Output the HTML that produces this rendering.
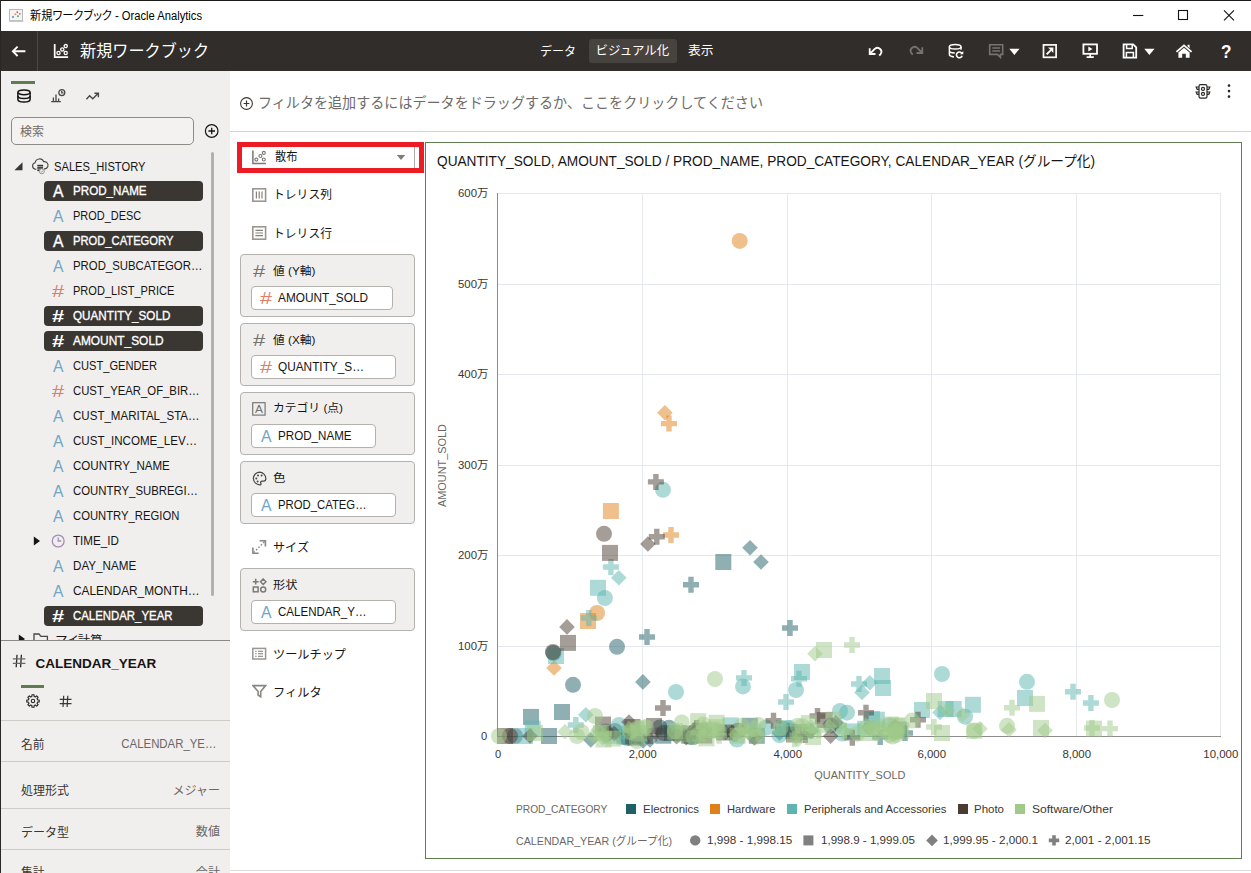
<!DOCTYPE html>
<html lang="ja"><head><meta charset="utf-8"><title>新規ワークブック - Oracle Analytics</title>
<style>
html,body{margin:0;padding:0;background:#fff}
html{width:1251px;height:873px;overflow:hidden}
body{width:1251px;height:873px;position:relative;overflow:hidden;font-family:"Liberation Sans","Noto Sans CJK JP",sans-serif;}
.app{position:absolute;left:0;top:0;width:1251px;height:873px;overflow:hidden;background:#fff}
.b{position:absolute;display:block}
.t{position:absolute;white-space:nowrap;line-height:1}
.sb{-webkit-text-stroke:0.35px #fff}
</style></head>
<body>
<div class="app">
<div class="b" style="left:0;top:0;width:1251px;height:1px;background:#1b1b1b"></div>
<div class="b" style="left:0;top:0;width:1px;height:873px;background:#2a2826;z-index:50"></div>
<svg class="b" style="left:9px;top:8px" width="15" height="15" viewBox="0 0 15 15" ><rect x="0.5" y="1.5" width="13" height="11" fill="#f4f4f4" stroke="#b9b9b9"/>
<rect x="0" y="12.5" width="14.5" height="1.6" fill="#c9c9c9"/>
<circle cx="4" cy="9" r="1" fill="#4a90c8"/><circle cx="6.3" cy="6.3" r="1" fill="#e9a13b"/><circle cx="9" cy="8.2" r="1" fill="#5fae5f"/><circle cx="8.3" cy="4.2" r="0.9" fill="#d9534f"/><circle cx="10.8" cy="5.8" r="0.9" fill="#4a90c8"/></svg>
<span class="t" style="left:30.00px;top:10.40px;font-size:12px;color:#000;transform:scaleX(0.9312);transform-origin:0 50%;font-feature-settings:'palt';">新規ワークブック - Oracle Analytics</span>
<svg class="b" style="left:1128px;top:5px" width="118" height="22" viewBox="0 0 118 22" ><g stroke="#111" stroke-width="1.1" fill="none">
<path d="M5 10.5h10.3"/><rect x="50.5" y="5.5" width="9" height="9"/><path d="M96 5.3l10 10M106 5.3l-10 10"/></g></svg>
<div class="b" style="left:1px;top:31px;width:1250px;height:40px;background:#312d2a"></div>
<div class="b" style="left:37px;top:31px;width:1px;height:40px;background:#4b4744"></div>
<svg class="b" style="left:10px;top:42.6px" width="18" height="16" viewBox="0 0 18 16" ><path d="M15.4 8.3H3.4M7.6 3.6L2.9 8.3l4.7 4.7" fill="none" stroke="#fff" stroke-width="1.9" stroke-linecap="butt" stroke-linejoin="miter"/></svg>
<svg class="b" style="left:53px;top:43px" width="16" height="16" viewBox="0 0 16 16" ><path d="M1.7 1v13.2h13.4" fill="none" stroke="#fff" stroke-width="1.7"/>
<circle cx="5.5" cy="10" r="1.6" fill="none" stroke="#fff" stroke-width="1.3"/><circle cx="9.3" cy="6.4" r="1.6" fill="none" stroke="#fff" stroke-width="1.3"/><circle cx="12.7" cy="3.1" r="1.6" fill="none" stroke="#fff" stroke-width="1.3"/><circle cx="12.7" cy="10" r="1.6" fill="none" stroke="#fff" stroke-width="1.3"/></svg>
<span class="t" style="left:80.00px;top:43.00px;font-size:16.5px;color:#fff;transform:scaleX(0.9773);transform-origin:0 50%;">新規ワークブック</span>
<div class="b" style="left:589px;top:39px;width:88px;height:24px;background:#47433f;border-radius:3px"></div>
<span class="t" style="left:540.00px;top:45.90px;font-size:12.5px;color:#fff;transform:scaleX(0.9596);transform-origin:0 50%;">データ</span>
<span class="t" style="left:595.60px;top:44.90px;font-size:12.5px;color:#fff;">ビジュアル化</span>
<span class="t" style="left:688.00px;top:45.40px;font-size:12.5px;color:#fff;transform:scaleX(1.0194);transform-origin:0 50%;">表示</span>
<svg class="b" style="left:866.4px;top:42.1px" width="20" height="16" viewBox="0 0 20 16" ><path d="M3.7 6.2v5.8h5.8M4.2 11.5l4.6-4.6a3.9 3.9 0 0 1 5.6 5.4l-1.2 1.2" fill="none" stroke="#fff" stroke-width="1.8"/></svg>
<svg class="b" style="left:906px;top:41.3px" width="20" height="16" viewBox="0 0 20 16" ><path d="M16.3 6.2v5.8h-5.8M15.8 11.5l-4.6-4.6a3.9 3.9 0 0 0-5.6 5.4l1.2 1.2" fill="none" stroke="#77736f" stroke-width="1.8"/></svg>
<svg class="b" style="left:947px;top:43px" width="18" height="16" viewBox="0 0 18 16" ><g fill="none" stroke="#fff" stroke-width="1.5"><ellipse cx="8.2" cy="3.8" rx="5.8" ry="2.3"/><path d="M2.4 3.8v7.8c0 1.2 2 2.1 4.6 2.3M14 3.8v3M2.4 7.7c0 1.2 2.4 2.2 5.4 2.2"/>
<path d="M14.6 10a2.9 2.9 0 1 0 .5 2.8" stroke-width="1.6"/></g><path d="M16.3 8v3.3h-3.3z" fill="#fff"/></svg>
<svg class="b" style="left:988px;top:43px" width="17" height="16" viewBox="0 0 17 16" ><path d="M1.7 1.8h13v9.6h-2.3v3l-3-3H1.7z" fill="none" stroke="#77736f" stroke-width="1.6"/><path d="M4.3 5h7.8M4.3 8h7.8" stroke="#77736f" stroke-width="1.4"/></svg>
<svg class="b" style="left:1009px;top:48px" width="11" height="8" viewBox="0 0 11 8" ><path d="M0.3 0.8h10.2L5.4 7z" fill="#fff"/></svg>
<svg class="b" style="left:1042px;top:43px" width="16" height="16" viewBox="0 0 16 16" ><rect x="1.5" y="1.9" width="12.6" height="12.4" fill="none" stroke="#fff" stroke-width="1.7"/><path d="M4.6 11.4l5.6-5.6" stroke="#fff" stroke-width="1.9"/><path d="M6 4.6h5.4v5.4z" fill="#fff"/></svg>
<svg class="b" style="left:1082px;top:43px" width="17" height="16" viewBox="0 0 17 16" ><rect x="1.4" y="1.4" width="13.6" height="9.4" fill="none" stroke="#fff" stroke-width="1.8"/><path d="M6.3 3.6l4.2 2.5-4.2 2.5z" fill="#fff"/><path d="M8.2 11v2.6M4.6 14.2h7.2" stroke="#fff" stroke-width="1.7"/></svg>
<svg class="b" style="left:1122px;top:43px" width="16" height="16" viewBox="0 0 16 16" ><path d="M1.6 1.4h9.6l3 3v10.2H1.6z" fill="none" stroke="#fff" stroke-width="1.8"/><path d="M4.6 1.6v4h5.6v-4M4.4 14.4V9.6h7v4.8" fill="none" stroke="#fff" stroke-width="1.5"/></svg>
<svg class="b" style="left:1144px;top:48px" width="11" height="8" viewBox="0 0 11 8" ><path d="M0.3 0.8h10.2L5.4 7z" fill="#fff"/></svg>
<svg class="b" style="left:1175px;top:43px" width="18" height="16" viewBox="0 0 18 16" ><path d="M0.8 8.2L9 1.2l8.2 7-1.2 1.3L9 3.6 2 9.5z" fill="#fff"/><path d="M3.4 9.4L9 4.8l5.6 4.6v5.4h-3.8v-4H7.2v4H3.4z" fill="#fff"/><path d="M12.6 1.8h2v3.4l-2-1.7z" fill="#fff"/></svg>
<span class="t" style="left:1220.50px;top:41.50px;font-size:19px;color:#fff;font-weight:700;transform:scaleX(0.9044);transform-origin:0 50%;">?</span>
<div class="b" style="left:1px;top:71px;width:229px;height:802px;background:#f1efed"></div>
<div class="b" style="left:11px;top:81px;width:24px;height:3px;background:#5f7d4f"></div>
<svg class="b" style="left:16px;top:88px" width="16" height="16" viewBox="0 0 16 16" ><g fill="none" stroke="#161513" stroke-width="1.5"><ellipse cx="8" cy="4.3" rx="6.1" ry="2.4"/><path d="M1.9 4.3v7.3c0 1.4 2.7 2.5 6.1 2.5s6.1-1.1 6.1-2.5V4.3"/><path d="M1.9 7.9c0 1.4 2.7 2.5 6.1 2.5s6.1-1.1 6.1-2.5"/></g></svg>
<svg class="b" style="left:50px;top:88px" width="17" height="16" viewBox="0 0 17 16" ><g stroke="#4a4643" stroke-width="1.3" fill="none"><path d="M1.2 13.6h9.6M3.4 13.4v-4M6 13.4V6.6M8.6 13.4v-3"/><circle cx="11.8" cy="4.6" r="3"/><path d="M11.8 2.8v2h1.6"/></g></svg>
<svg class="b" style="left:85px;top:89.2px" width="16" height="16" viewBox="0 0 16 16" ><path d="M1.4 10.2l3.2-3.4 3.2 3 5.2-5.2M9.4 4.2h4v4" fill="none" stroke="#4a4643" stroke-width="1.4"/></svg>
<div class="b" style="left:11px;top:117px;width:183px;height:28px;border:1px solid #8f8b87;border-radius:5px;box-sizing:border-box;background:#f4f2f0"></div>
<span class="t" style="left:20.00px;top:126.10px;font-size:12px;color:#6f6b68;">検索</span>
<svg class="b" style="left:204px;top:123px" width="16" height="16" viewBox="0 0 16 16" ><circle cx="7.7" cy="8" r="6.3" fill="none" stroke="#161513" stroke-width="1.2"/><path d="M4.4 8h6.6M7.7 4.7v6.6" stroke="#161513" stroke-width="1.3"/></svg>
<div class="b" style="left:210.5px;top:152px;width:3.4px;height:444px;background:#b4b0ac;border-radius:2px"></div>
<svg class="b" style="left:13.6px;top:161.8px" width="9" height="9" viewBox="0 0 9 9" ><path d="M8.5 0.2V8.3H0.4z" fill="#3a3632"/></svg>
<svg class="b" style="left:31px;top:157px" width="18" height="18" viewBox="0 0 18 18" ><path d="M5.4 12.2H4.6a3.3 3.3 0 0 1-.5-6.5 4.5 4.5 0 0 1 8.6-1 3.6 3.6 0 0 1 1.3 7.2H13" fill="none" stroke="#4a4643" stroke-width="1.1"/>
<g fill="#3a3632"><rect x="6.3" y="7.8" width="5.8" height="1.7"/><rect x="6.3" y="10.1" width="5.8" height="1.7"/><rect x="6.3" y="12.4" width="5.8" height="1.7"/></g>
<circle cx="10.8" cy="14.3" r="2.5" fill="#f1efed" stroke="#8b8783" stroke-width="0.9"/><path d="M9.7 14.3l0.9 0.9 1.4-1.7" fill="none" stroke="#8b8783" stroke-width="0.8"/></svg>
<span class="t" style="left:54.40px;top:160.00px;font-size:13px;color:#161513;transform:scaleX(0.8594);transform-origin:0 50%;">SALES_HISTORY</span>
<div class="b" style="left:44px;top:181px;width:159px;height:20px;background:#3a3632;border-radius:4px"></div>
<span class="t sb" style="left:53.00px;top:183.10px;font-size:16.5px;color:#fff;transform:scaleX(0.9532);transform-origin:0 50%;">A</span>
<span class="t sb" style="left:72.60px;top:184.00px;font-size:13px;color:#fff;transform:scaleX(0.8936);transform-origin:0 50%;">PROD_NAME</span>
<span class="t" style="left:53.00px;top:208.10px;font-size:16.5px;color:#6fa6c6;transform:scaleX(0.9532);transform-origin:0 50%;">A</span>
<span class="t" style="left:72.60px;top:209.00px;font-size:13px;color:#161513;transform:scaleX(0.8428);transform-origin:0 50%;">PROD_DESC</span>
<div class="b" style="left:44px;top:231px;width:159px;height:20px;background:#3a3632;border-radius:4px"></div>
<span class="t sb" style="left:53.00px;top:233.10px;font-size:16.5px;color:#fff;transform:scaleX(0.9532);transform-origin:0 50%;">A</span>
<span class="t sb" style="left:72.60px;top:234.00px;font-size:13px;color:#fff;transform:scaleX(0.8615);transform-origin:0 50%;">PROD_CATEGORY</span>
<span class="t" style="left:53.00px;top:258.10px;font-size:16.5px;color:#6fa6c6;transform:scaleX(0.9532);transform-origin:0 50%;">A</span>
<span class="t" style="left:72.60px;top:259.00px;font-size:13px;color:#161513;transform:scaleX(0.8746);transform-origin:0 50%;">PROD_SUBCATEGOR…</span>
<span class="t" style="left:52.00px;top:283.10px;font-size:16.5px;color:#d9806a;transform:scaleX(1.3279);transform-origin:0 50%;">#</span>
<span class="t" style="left:72.60px;top:284.00px;font-size:13px;color:#161513;transform:scaleX(0.8498);transform-origin:0 50%;">PROD_LIST_PRICE</span>
<div class="b" style="left:44px;top:306px;width:159px;height:20px;background:#3a3632;border-radius:4px"></div>
<span class="t" style="left:52.00px;top:308.10px;font-size:16.5px;color:#fff;font-weight:700;transform:scaleX(1.3279);transform-origin:0 50%;">#</span>
<span class="t sb" style="left:72.60px;top:309.00px;font-size:13px;color:#fff;transform:scaleX(0.8989);transform-origin:0 50%;">QUANTITY_SOLD</span>
<div class="b" style="left:44px;top:331px;width:159px;height:20px;background:#3a3632;border-radius:4px"></div>
<span class="t" style="left:52.00px;top:333.10px;font-size:16.5px;color:#fff;font-weight:700;transform:scaleX(1.3279);transform-origin:0 50%;">#</span>
<span class="t sb" style="left:72.60px;top:334.00px;font-size:13px;color:#fff;transform:scaleX(0.9154);transform-origin:0 50%;">AMOUNT_SOLD</span>
<span class="t" style="left:53.00px;top:358.10px;font-size:16.5px;color:#6fa6c6;transform:scaleX(0.9532);transform-origin:0 50%;">A</span>
<span class="t" style="left:72.60px;top:359.00px;font-size:13px;color:#161513;transform:scaleX(0.8550);transform-origin:0 50%;">CUST_GENDER</span>
<span class="t" style="left:52.00px;top:383.10px;font-size:16.5px;color:#d9806a;transform:scaleX(1.3279);transform-origin:0 50%;">#</span>
<span class="t" style="left:72.60px;top:384.00px;font-size:13px;color:#161513;transform:scaleX(0.8719);transform-origin:0 50%;">CUST_YEAR_OF_BIR…</span>
<span class="t" style="left:53.00px;top:408.10px;font-size:16.5px;color:#6fa6c6;transform:scaleX(0.9532);transform-origin:0 50%;">A</span>
<span class="t" style="left:72.60px;top:409.00px;font-size:13px;color:#161513;transform:scaleX(0.8881);transform-origin:0 50%;">CUST_MARITAL_STA…</span>
<span class="t" style="left:53.00px;top:433.10px;font-size:16.5px;color:#6fa6c6;transform:scaleX(0.9532);transform-origin:0 50%;">A</span>
<span class="t" style="left:72.60px;top:434.00px;font-size:13px;color:#161513;transform:scaleX(0.8908);transform-origin:0 50%;">CUST_INCOME_LEV…</span>
<span class="t" style="left:53.00px;top:458.10px;font-size:16.5px;color:#6fa6c6;transform:scaleX(0.9532);transform-origin:0 50%;">A</span>
<span class="t" style="left:72.60px;top:459.00px;font-size:13px;color:#161513;transform:scaleX(0.8893);transform-origin:0 50%;">COUNTRY_NAME</span>
<span class="t" style="left:53.00px;top:483.10px;font-size:16.5px;color:#6fa6c6;transform:scaleX(0.9532);transform-origin:0 50%;">A</span>
<span class="t" style="left:72.60px;top:484.00px;font-size:13px;color:#161513;transform:scaleX(0.8754);transform-origin:0 50%;">COUNTRY_SUBREGI…</span>
<span class="t" style="left:53.00px;top:508.10px;font-size:16.5px;color:#6fa6c6;transform:scaleX(0.9532);transform-origin:0 50%;">A</span>
<span class="t" style="left:72.60px;top:509.00px;font-size:13px;color:#161513;transform:scaleX(0.8673);transform-origin:0 50%;">COUNTRY_REGION</span>
<svg class="b" style="left:51px;top:533px" width="16" height="16" viewBox="0 0 16 16" ><circle cx="7.2" cy="8" r="5.9" fill="none" stroke="#a58db5" stroke-width="1.3"/><path d="M7.2 4.4V8h3" fill="none" stroke="#a58db5" stroke-width="1.3"/></svg>
<svg class="b" style="left:33px;top:536px" width="8" height="10" viewBox="0 0 8 10" ><path d="M0.8 0.4l6.2 4.6-6.2 4.6z" fill="#161513"/></svg>
<span class="t" style="left:72.60px;top:534.00px;font-size:13px;color:#161513;transform:scaleX(0.8948);transform-origin:0 50%;">TIME_ID</span>
<span class="t" style="left:53.00px;top:558.10px;font-size:16.5px;color:#6fa6c6;transform:scaleX(0.9532);transform-origin:0 50%;">A</span>
<span class="t" style="left:72.60px;top:559.00px;font-size:13px;color:#161513;transform:scaleX(0.8957);transform-origin:0 50%;">DAY_NAME</span>
<span class="t" style="left:53.00px;top:583.10px;font-size:16.5px;color:#6fa6c6;transform:scaleX(0.9532);transform-origin:0 50%;">A</span>
<span class="t" style="left:72.60px;top:584.00px;font-size:13px;color:#161513;transform:scaleX(0.9128);transform-origin:0 50%;">CALENDAR_MONTH…</span>
<div class="b" style="left:44px;top:606px;width:159px;height:20px;background:#3a3632;border-radius:4px"></div>
<span class="t" style="left:52.00px;top:608.10px;font-size:16.5px;color:#fff;font-weight:700;transform:scaleX(1.3279);transform-origin:0 50%;">#</span>
<span class="t sb" style="left:72.60px;top:609.00px;font-size:13px;color:#fff;transform:scaleX(0.8771);transform-origin:0 50%;">CALENDAR_YEAR</span>
<div class="b" style="left:1px;top:628px;width:229px;height:12px;overflow:hidden">
<svg class="b" style="left:17px;top:6px" width="8" height="10"><path d="M0.8 0.4l6.2 4.6-6.2 4.6z" fill="#161513"/></svg>
<svg class="b" style="left:32px;top:5px" width="16" height="14"><path d="M1 1h5l2 2.4h6.4V13H1z" fill="none" stroke="#4a4643" stroke-width="1.3"/></svg>
<span class="t" style="left:54.70px;top:7.10px;font-size:12px;color:#161513;transform:scaleX(1.0262);transform-origin:0 50%;font-feature-settings:'palt';">マイ計算</span>
</div>
<div class="b" style="left:1px;top:640px;width:229px;height:1px;background:#8d8986"></div>
<svg class="b" style="left:12px;top:654px" width="14" height="14" viewBox="0 0 14 14" ><path d="M5 0.8L4.2 13.2M9.4 0.8L8.6 13.2" stroke="#2a2725" stroke-width="1.3" fill="none"/><path d="M0.8 4.9h12.6M0.8 9.3h12.6" stroke="#6b6764" stroke-width="1.3" fill="none"/></svg>
<span class="t" style="left:35.50px;top:656.50px;font-size:13.5px;color:#161513;font-weight:700;">CALENDAR_YEAR</span>
<div class="b" style="left:21px;top:685px;width:23px;height:3px;background:#5f7d4f"></div>
<svg class="b" style="left:25.5px;top:694.4px" width="14" height="14" viewBox="0 0 14 14" ><path d="M5.87 2.44L5.97 0.79L8.03 0.79L8.13 2.44L9.42 2.97L10.66 1.87L12.13 3.34L11.03 4.58L11.56 5.87L13.21 5.97L13.21 8.03L11.56 8.13L11.03 9.42L12.13 10.66L10.66 12.13L9.42 11.03L8.13 11.56L8.03 13.21L5.97 13.21L5.87 11.56L4.58 11.03L3.34 12.13L1.87 10.66L2.97 9.42L2.44 8.13L0.79 8.03L0.79 5.97L2.44 5.87L2.97 4.58L1.87 3.34L3.34 1.87L4.58 2.97z" fill="none" stroke="#2a2725" stroke-width="1.15" stroke-linejoin="round"/><circle cx="7" cy="7" r="1.7" fill="none" stroke="#2a2725" stroke-width="1.1"/></svg>
<svg class="b" style="left:59px;top:695px" width="13" height="13" viewBox="0 0 13 13" ><path d="M4.7 0.8L4 12M8.8 0.8L8.1 12" stroke="#3a3632" stroke-width="1.2" fill="none"/><path d="M0.7 4.3h11.8M0.7 8.6h11.8" stroke="#3a3632" stroke-width="1.2" fill="none"/></svg>
<div class="b" style="left:1px;top:720px;width:229px;height:1px;background:#cfcbc7"></div>
<div class="b" style="left:1px;top:761px;width:229px;height:1px;background:#cfcbc7"></div>
<div class="b" style="left:1px;top:808px;width:229px;height:1px;background:#cfcbc7"></div>
<div class="b" style="left:1px;top:849px;width:229px;height:1px;background:#cfcbc7"></div>
<span class="t" style="left:21.00px;top:738.70px;font-size:12px;color:#3a3632;transform:scaleX(0.9785);transform-origin:0 50%;">名前</span>
<span class="t" style="left:108.12px;top:737.10px;font-size:13px;color:#6b6764;transform:scaleX(0.8766);transform-origin:100% 50%;">CALENDAR_YE…</span>
<span class="t" style="left:21.00px;top:785.20px;font-size:12px;color:#3a3632;">処理形式</span>
<span class="t" style="left:172.59px;top:785.20px;font-size:12px;color:#6b6764;">メジャー</span>
<span class="t" style="left:21.00px;top:826.70px;font-size:12px;color:#3a3632;">データ型</span>
<span class="t" style="left:195.98px;top:826.20px;font-size:12px;color:#6b6764;transform:scaleX(1.0077);transform-origin:100% 50%;">数値</span>
<span class="t" style="left:21.00px;top:867.00px;font-size:12px;color:#3a3632;transform:scaleX(0.9785);transform-origin:0 50%;">集計</span>
<span class="t" style="left:195.98px;top:866.50px;font-size:12px;color:#6b6764;transform:scaleX(1.0077);transform-origin:100% 50%;">合計</span>
<svg class="b" style="left:238.6px;top:95.5px" width="15" height="15" viewBox="0 0 15 15" ><circle cx="7.5" cy="7.5" r="5.9" fill="none" stroke="#3a3632" stroke-width="1.1"/><path d="M4.6 7.5h5.8M7.5 4.6v5.8" stroke="#3a3632" stroke-width="1.2"/></svg>
<span class="t" style="left:257.80px;top:95.50px;font-size:14.5px;color:#6f6b68;transform:scaleX(0.9701);transform-origin:0 50%;">フィルタを追加するにはデータをドラッグするか、ここをクリックしてください</span>
<svg class="b" style="left:1194px;top:83px" width="18" height="17" viewBox="0 0 18 17" ><g fill="none" stroke="#2a2725" stroke-width="1.2"><rect x="5" y="1.6" width="8" height="13.6" rx="1.6"/><circle cx="9" cy="5.9" r="1.5"/><circle cx="9" cy="10.9" r="1.5"/>
<path d="M5 4H2.2l1 2.4H5M5 9H2.2l1 2.4H5M13 4h2.8l-1 2.4H13M13 9h2.8l-1 2.4H13"/></g></svg>
<svg class="b" style="left:1226px;top:83px" width="6" height="16" viewBox="0 0 6 16" ><circle cx="3" cy="2.6" r="1.3" fill="#2a2725"/><circle cx="3" cy="8.1" r="1.3" fill="#2a2725"/><circle cx="3" cy="13.6" r="1.3" fill="#2a2725"/></svg>
<div class="b" style="left:230px;top:131px;width:1021px;height:1px;background:#d5d2cf"></div>
<div class="b" style="left:237px;top:142px;width:187px;height:31px;border:5px solid #ec1c24;box-sizing:border-box;background:#fff"></div>
<div class="b" style="left:414px;top:147px;width:1px;height:21px;background:#b0aca8"></div>
<svg class="b" style="left:252px;top:149.5px" width="15" height="15" viewBox="0 0 15 15" ><path d="M0.9 0.6v13h13" fill="none" stroke="#7b7773" stroke-width="1.5"/>
<circle cx="4.4" cy="9.6" r="1.5" fill="none" stroke="#7b7773" stroke-width="1.1"/><circle cx="8.4" cy="6" r="1.5" fill="none" stroke="#7b7773" stroke-width="1.1"/><circle cx="11.8" cy="9.5" r="1.5" fill="none" stroke="#7b7773" stroke-width="1.1"/><circle cx="11.8" cy="2.9" r="1.5" fill="none" stroke="#7b7773" stroke-width="1.1"/></svg>
<span class="t" style="left:274.50px;top:150.90px;font-size:12px;color:#161513;transform:scaleX(0.9369);transform-origin:0 50%;">散布</span>
<svg class="b" style="left:396px;top:154px" width="10" height="7" viewBox="0 0 10 7" ><path d="M0.8 1h8.4L5 6z" fill="#807c78"/></svg>
<svg class="b" style="left:252px;top:188px" width="15" height="15" viewBox="0 0 15 15" ><rect x="0.8" y="0.8" width="12.8" height="12.4" fill="none" stroke="#9b9691" stroke-width="1.6"/><path d="M4.4 3.4v7.2M7.2 3.4v7.2M10 3.4v7.2" stroke="#86817d" stroke-width="1.2"/></svg>
<span class="t" style="left:273.20px;top:189.10px;font-size:12px;color:#161513;transform:scaleX(0.9831);transform-origin:0 50%;">トレリス列</span>
<svg class="b" style="left:252px;top:226px" width="15" height="15" viewBox="0 0 15 15" ><rect x="0.8" y="0.8" width="12.8" height="12.4" fill="none" stroke="#9b9691" stroke-width="1.6"/><path d="M3.4 4.3h7.6M3.4 7h7.6M3.4 9.7h7.6" stroke="#86817d" stroke-width="1.2"/></svg>
<span class="t" style="left:273.20px;top:227.60px;font-size:12px;color:#161513;transform:scaleX(0.9831);transform-origin:0 50%;">トレリス行</span>
<div class="b" style="left:240px;top:254px;width:175px;height:63px;background:#f1efed;border:1px solid #b5b1ad;border-radius:4px;box-sizing:border-box"></div>
<span class="t" style="left:252.80px;top:263.30px;font-size:16.5px;color:#75716d;transform:scaleX(1.3279);transform-origin:0 50%;">#</span>
<span class="t" style="left:272.80px;top:266.30px;font-size:11.5px;color:#161513;transform:scaleX(1.0209);transform-origin:0 50%;">値 (Y軸)</span>
<div class="b" style="left:251px;top:286px;width:142px;height:24px;background:#fff;border:1px solid #b5b1ad;border-radius:4px;box-sizing:border-box"></div>
<span class="t" style="left:259.80px;top:291.00px;font-size:16px;color:#dd7f69;transform:scaleX(1.3474);transform-origin:0 50%;">#</span>
<span class="t" style="left:277.80px;top:291.30px;font-size:13px;color:#161513;transform:scaleX(0.9094);transform-origin:0 50%;">AMOUNT_SOLD</span>
<div class="b" style="left:240px;top:323px;width:175px;height:63px;background:#f1efed;border:1px solid #b5b1ad;border-radius:4px;box-sizing:border-box"></div>
<span class="t" style="left:252.80px;top:332.30px;font-size:16.5px;color:#75716d;transform:scaleX(1.3279);transform-origin:0 50%;">#</span>
<span class="t" style="left:272.80px;top:335.30px;font-size:11.5px;color:#161513;transform:scaleX(1.0209);transform-origin:0 50%;">値 (X軸)</span>
<div class="b" style="left:251px;top:355px;width:145px;height:24px;background:#fff;border:1px solid #b5b1ad;border-radius:4px;box-sizing:border-box"></div>
<span class="t" style="left:259.80px;top:360.00px;font-size:16px;color:#dd7f69;transform:scaleX(1.3474);transform-origin:0 50%;">#</span>
<span class="t" style="left:277.80px;top:360.30px;font-size:13px;color:#161513;transform:scaleX(0.9089);transform-origin:0 50%;">QUANTITY_S…</span>
<div class="b" style="left:240px;top:392px;width:175px;height:63px;background:#f1efed;border:1px solid #b5b1ad;border-radius:4px;box-sizing:border-box"></div>
<svg class="b" style="left:252px;top:402px" width="14" height="14" viewBox="0 0 14 14" ><rect x="0.7" y="0.7" width="12.4" height="12.4" fill="none" stroke="#7b7773" stroke-width="1.2"/></svg>
<span class="t" style="left:254.90px;top:404.20px;font-size:10.5px;color:#75716d;transform:scaleX(1.1403);transform-origin:0 50%;">A</span>
<span class="t" style="left:272.80px;top:403.30px;font-size:11.5px;color:#161513;transform:scaleX(1.0240);transform-origin:0 50%;">カテゴリ (点)</span>
<div class="b" style="left:251px;top:424px;width:125px;height:24px;background:#fff;border:1px solid #b5b1ad;border-radius:4px;box-sizing:border-box"></div>
<span class="t" style="left:261.20px;top:428.00px;font-size:16.5px;color:#6fa6c6;transform:scaleX(0.9532);transform-origin:0 50%;">A</span>
<span class="t" style="left:277.80px;top:429.30px;font-size:13px;color:#161513;transform:scaleX(0.8936);transform-origin:0 50%;">PROD_NAME</span>
<div class="b" style="left:240px;top:461px;width:175px;height:63px;background:#f1efed;border:1px solid #b5b1ad;border-radius:4px;box-sizing:border-box"></div>
<svg class="b" style="left:251.5px;top:470.5px" width="15" height="15" viewBox="0 0 15 15" ><path d="M7.4 1.2a6.3 6.3 0 1 0 .6 12.6c1.2 0 1.2-1 .8-1.6-.6-1 .1-2 1.3-2h1.6c1.3 0 2.1-1 2.1-2.4A6.4 6.4 0 0 0 7.4 1.2z" fill="none" stroke="#4a4643" stroke-width="1.2"/>
<circle cx="4.3" cy="7.6" r="1" fill="#4a4643"/><circle cx="6" cy="4.4" r="1" fill="#4a4643"/><circle cx="9.6" cy="4.6" r="1" fill="#4a4643"/><circle cx="5.6" cy="10.6" r="1" fill="#4a4643"/></svg>
<span class="t" style="left:272.80px;top:472.80px;font-size:11.5px;color:#161513;transform:scaleX(1.0870);transform-origin:0 50%;">色</span>
<div class="b" style="left:251px;top:493px;width:145px;height:24px;background:#fff;border:1px solid #b5b1ad;border-radius:4px;box-sizing:border-box"></div>
<span class="t" style="left:261.20px;top:497.00px;font-size:16.5px;color:#6fa6c6;transform:scaleX(0.9532);transform-origin:0 50%;">A</span>
<span class="t" style="left:277.80px;top:498.30px;font-size:13px;color:#161513;transform:scaleX(0.8710);transform-origin:0 50%;">PROD_CATEG…</span>
<svg class="b" style="left:252px;top:539px" width="15" height="16" viewBox="0 0 15 16" ><g fill="none" stroke="#8a8683"><path d="M7.6 1.8h5.8v5.8" stroke-width="1.6"/><path d="M0.9 8.4v5.8h5.8" stroke-width="1.6"/><path d="M12.4 2.8L2 13.2" stroke-width="1.3" stroke-dasharray="1.7 1.7"/></g></svg>
<span class="t" style="left:272.50px;top:542.30px;font-size:12px;color:#161513;transform:scaleX(1.0101);transform-origin:0 50%;">サイズ</span>
<div class="b" style="left:240px;top:568px;width:175px;height:63px;background:#f1efed;border:1px solid #b5b1ad;border-radius:4px;box-sizing:border-box"></div>
<svg class="b" style="left:251.5px;top:577.5px" width="15" height="15" viewBox="0 0 15 15" ><g fill="none" stroke="#7d7975" stroke-width="1.5"><path d="M3.7 0.8v5.8M0.8 3.7h5.8"/><path d="M11.2 0.9l2.7 2.8-2.7 2.8-2.7-2.8z"/><rect x="1.3" y="9" width="4.8" height="4.8"/><circle cx="11.2" cy="11.4" r="2.5"/></g></svg>
<span class="t" style="left:272.80px;top:579.50px;font-size:11.5px;color:#161513;transform:scaleX(1.0652);transform-origin:0 50%;">形状</span>
<div class="b" style="left:251px;top:600px;width:145px;height:24px;background:#fff;border:1px solid #b5b1ad;border-radius:4px;box-sizing:border-box"></div>
<span class="t" style="left:261.20px;top:604.00px;font-size:16.5px;color:#6fa6c6;transform:scaleX(0.9532);transform-origin:0 50%;">A</span>
<span class="t" style="left:277.80px;top:605.30px;font-size:13px;color:#161513;transform:scaleX(0.8876);transform-origin:0 50%;">CALENDAR_Y…</span>
<svg class="b" style="left:252px;top:646px" width="15" height="15" viewBox="0 0 15 15" ><rect x="0.8" y="2.4" width="12.8" height="10.6" fill="none" stroke="#9b9691" stroke-width="1.5"/><path d="M3.2 5.2h1.4M6 5.2h5M3.2 7.7h1.4M6 7.7h5M3.2 10.2h1.4M6 10.2h5" stroke="#7b7773" stroke-width="1.1"/></svg>
<span class="t" style="left:272.60px;top:648.60px;font-size:12px;color:#161513;transform:scaleX(1.0137);transform-origin:0 50%;">ツールチップ</span>
<svg class="b" style="left:252px;top:684px" width="15" height="15" viewBox="0 0 15 15" ><path d="M1 1.6h12.6L8.7 7.6v5.2l-2.6-1.8V7.6z" fill="none" stroke="#8a8581" stroke-width="1.6" stroke-linejoin="miter"/></svg>
<span class="t" style="left:272.80px;top:686.70px;font-size:12px;color:#161513;transform:scaleX(1.0175);transform-origin:0 50%;">フィルタ</span>
<div class="b" style="left:425px;top:142px;width:817px;height:717px;border:1px solid #5f7d4f;box-sizing:border-box;background:#fff"></div>
<span class="t" style="left:436.60px;top:153.70px;font-size:14px;color:#161513;transform:scaleX(0.9757);transform-origin:0 50%;">QUANTITY_SOLD, AMOUNT_SOLD / PROD_NAME, PROD_CATEGORY, CALENDAR_YEAR (グループ化)</span>
<div class="b" style="left:230px;top:870px;width:1021px;height:1px;background:#dedbd8"></div>
<svg class="b" style="left:0;top:0" width="1251" height="873" viewBox="0 0 1251 873" font-family="'Liberation Sans','Noto Sans CJK JP',sans-serif"><path d="M642.5 193v543" stroke="#e6e9ee" stroke-width="1"/><path d="M787.5 193v543" stroke="#e6e9ee" stroke-width="1"/><path d="M931.5 193v543" stroke="#e6e9ee" stroke-width="1"/><path d="M1076.5 193v543" stroke="#e6e9ee" stroke-width="1"/><path d="M1220.5 193v543" stroke="#e6e9ee" stroke-width="1"/><path d="M497 193.5H1221" stroke="#e4e8ee" stroke-width="1"/><path d="M497 284.5H1221" stroke="#e4e8ee" stroke-width="1"/><path d="M497 374.5H1221" stroke="#e4e8ee" stroke-width="1"/><path d="M497 465.5H1221" stroke="#e4e8ee" stroke-width="1"/><path d="M497 555.5H1221" stroke="#e4e8ee" stroke-width="1"/><path d="M497 646.5H1221" stroke="#e4e8ee" stroke-width="1"/><path d="M497.5 193v544" stroke="#8c8c8c" stroke-width="1"/><path d="M497 736.5H1221" stroke="#8c8c8c" stroke-width="1"/><g fill-opacity="0.5"><path d="M868.5 719.8l7.8 7.8-7.8 7.8-7.8-7.8z" fill="#1f5f66"/><circle cx="782.9" cy="728.9" r="8" fill="#1f5f66"/><path d="M732.2 725.8h5.4v5.3h5.3v5.4h-5.3v5.3h-5.4v-5.3h-5.3v-5.4h5.3z" fill="#1f5f66"/><rect x="748.8" y="727.8" width="16" height="16" fill="#1f5f66"/><circle cx="831.0" cy="725.6" r="8" fill="#1f5f66"/><rect x="791.4" y="724.0" width="16" height="16" fill="#1f5f66"/><path d="M810.9 723.3l7.8 7.8-7.8 7.8-7.8-7.8z" fill="#1f5f66"/><circle cx="627.3" cy="737.8" r="8" fill="#1f5f66"/><circle cx="790.6" cy="730.5" r="8" fill="#1f5f66"/><path d="M785.1 723.3h5.4v5.3h5.3v5.4h-5.3v5.3h-5.4v-5.3h-5.3v-5.4h5.3z" fill="#1f5f66"/><path d="M643.1 733.2l7.8 7.8-7.8 7.8-7.8-7.8z" fill="#1f5f66"/><path d="M681.2 727.8h5.4v5.3h5.3v5.4h-5.3v5.3h-5.4v-5.3h-5.3v-5.4h5.3z" fill="#1f5f66"/><circle cx="622.9" cy="736.8" r="8" fill="#1f5f66"/><circle cx="693.1" cy="737.0" r="8" fill="#1f5f66"/><circle cx="615.2" cy="731.1" r="8" fill="#1f5f66"/><rect x="664.0" y="725.1" width="16" height="16" fill="#1f5f66"/><circle cx="659.8" cy="727.5" r="8" fill="#1f5f66"/><path d="M694.5 721.2l7.8 7.8-7.8 7.8-7.8-7.8z" fill="#1f5f66"/><path d="M630.0 726.7h5.4v5.3h5.3v5.4h-5.3v5.3h-5.4v-5.3h-5.3v-5.4h5.3z" fill="#1f5f66"/><circle cx="697.0" cy="732.7" r="8" fill="#1f5f66"/><rect x="627.5" y="729.8" width="16" height="16" fill="#1f5f66"/><rect x="655.3" y="727.7" width="16" height="16" fill="#1f5f66"/><circle cx="690.1" cy="736.8" r="8" fill="#1f5f66"/><path d="M779.5 725.3l7.8 7.8-7.8 7.8-7.8-7.8z" fill="#1f5f66"/><rect x="890.9" y="721.6" width="16" height="16" fill="#1f5f66"/><rect x="741.8" y="717.8" width="16" height="16" fill="#1f5f66"/><path d="M877.5 729.0h5.4v5.3h5.3v5.4h-5.3v5.3h-5.4v-5.3h-5.3v-5.4h5.3z" fill="#1f5f66"/><path d="M725.6 724.7l7.8 7.8-7.8 7.8-7.8-7.8z" fill="#1f5f66"/><rect x="715.3" y="554.0" width="16" height="16" fill="#1f5f66"/><path d="M688.3 576.8h5.4v5.3h5.3v5.4h-5.3v5.3h-5.4v-5.3h-5.3v-5.4h5.3z" fill="#1f5f66"/><circle cx="553.5" cy="653.0" r="8" fill="#1f5f66"/><circle cx="617.0" cy="646.8" r="8" fill="#1f5f66"/><path d="M644.3 629.0h5.4v5.3h5.3v5.4h-5.3v5.3h-5.4v-5.3h-5.3v-5.4h5.3z" fill="#1f5f66"/><circle cx="573.0" cy="684.8" r="8" fill="#1f5f66"/><path d="M642.9 674.1l7.8 7.8-7.8 7.8-7.8-7.8z" fill="#1f5f66"/><rect x="554.0" y="704.0" width="16" height="16" fill="#1f5f66"/><rect x="523.0" y="708.9" width="16" height="16" fill="#1f5f66"/><path d="M750.0 540.0l7.8 7.8-7.8 7.8-7.8-7.8z" fill="#1f5f66"/><path d="M761.0 554.2l7.8 7.8-7.8 7.8-7.8-7.8z" fill="#1f5f66"/><path d="M787.3 620.0h5.4v5.3h5.3v5.4h-5.3v5.3h-5.4v-5.3h-5.3v-5.4h5.3z" fill="#1f5f66"/><path d="M902.3 725.0h5.4v5.3h5.3v5.4h-5.3v5.3h-5.4v-5.3h-5.3v-5.4h5.3z" fill="#1f5f66"/><rect x="541.0" y="728.0" width="16" height="16" fill="#1f5f66"/><circle cx="515.0" cy="736.0" r="8" fill="#1f5f66"/><circle cx="669.0" cy="727.8" r="8" fill="#1f5f66"/><path d="M590.8 732.2l7.8 7.8-7.8 7.8-7.8-7.8z" fill="#1f5f66"/><path d="M650.0 732.2l7.8 7.8-7.8 7.8-7.8-7.8z" fill="#1f5f66"/><circle cx="739.7" cy="240.9" r="8" fill="#e0801a"/><path d="M664.9 405.0l7.8 7.8-7.8 7.8-7.8-7.8z" fill="#e0801a"/><path d="M666.3 415.6h5.4v5.3h5.3v5.4h-5.3v5.3h-5.4v-5.3h-5.3v-5.4h5.3z" fill="#e0801a"/><rect x="602.9" y="503.0" width="16" height="16" fill="#e0801a"/><path d="M668.3 527.0h5.4v5.3h5.3v5.4h-5.3v5.3h-5.4v-5.3h-5.3v-5.4h5.3z" fill="#e0801a"/><circle cx="597.0" cy="613.0" r="8" fill="#e0801a"/><rect x="580.0" y="613.0" width="16" height="16" fill="#e0801a"/><path d="M554.0 660.2l7.8 7.8-7.8 7.8-7.8-7.8z" fill="#e0801a"/><rect x="602.5" y="727.8" width="16" height="16" fill="#5cb5b0"/><circle cx="789.4" cy="728.2" r="8" fill="#5cb5b0"/><rect x="616.3" y="728.6" width="16" height="16" fill="#5cb5b0"/><path d="M639.6 724.9l7.8 7.8-7.8 7.8-7.8-7.8z" fill="#5cb5b0"/><circle cx="626.4" cy="732.6" r="8" fill="#5cb5b0"/><circle cx="889.0" cy="725.5" r="8" fill="#5cb5b0"/><path d="M637.1 726.2l7.8 7.8-7.8 7.8-7.8-7.8z" fill="#5cb5b0"/><rect x="775.9" y="720.1" width="16" height="16" fill="#5cb5b0"/><path d="M839.3 717.2l7.8 7.8-7.8 7.8-7.8-7.8z" fill="#5cb5b0"/><rect x="868.8" y="711.7" width="16" height="16" fill="#5cb5b0"/><circle cx="737.0" cy="739.6" r="8" fill="#5cb5b0"/><circle cx="842.2" cy="733.6" r="8" fill="#5cb5b0"/><rect x="857.2" y="720.8" width="16" height="16" fill="#5cb5b0"/><circle cx="766.2" cy="727.6" r="8" fill="#5cb5b0"/><circle cx="678.7" cy="733.9" r="8" fill="#5cb5b0"/><rect x="722.7" y="717.4" width="16" height="16" fill="#5cb5b0"/><path d="M808.5 722.7h5.4v5.3h5.3v5.4h-5.3v5.3h-5.4v-5.3h-5.3v-5.4h5.3z" fill="#5cb5b0"/><circle cx="605.5" cy="731.2" r="8" fill="#5cb5b0"/><path d="M750.3 723.0h5.4v5.3h5.3v5.4h-5.3v5.3h-5.4v-5.3h-5.3v-5.4h5.3z" fill="#5cb5b0"/><rect x="844.5" y="723.4" width="16" height="16" fill="#5cb5b0"/><circle cx="779.4" cy="735.2" r="8" fill="#5cb5b0"/><circle cx="663.0" cy="489.8" r="8" fill="#5cb5b0"/><path d="M608.2 559.0h5.4v5.3h5.3v5.4h-5.3v5.3h-5.4v-5.3h-5.3v-5.4h5.3z" fill="#5cb5b0"/><path d="M618.8 570.0l7.8 7.8-7.8 7.8-7.8-7.8z" fill="#5cb5b0"/><rect x="590.0" y="579.8" width="16" height="16" fill="#5cb5b0"/><circle cx="604.9" cy="598.0" r="8" fill="#5cb5b0"/><path d="M586.1 610.0h5.4v5.3h5.3v5.4h-5.3v5.3h-5.4v-5.3h-5.3v-5.4h5.3z" fill="#5cb5b0"/><rect x="548.0" y="648.0" width="16" height="16" fill="#5cb5b0"/><circle cx="676.0" cy="692.0" r="8" fill="#5cb5b0"/><path d="M585.8 707.0l7.8 7.8-7.8 7.8-7.8-7.8z" fill="#5cb5b0"/><rect x="794.0" y="664.0" width="16" height="16" fill="#5cb5b0"/><rect x="874.0" y="668.0" width="16" height="16" fill="#5cb5b0"/><path d="M741.3 669.9h5.4v5.3h5.3v5.4h-5.3v5.3h-5.4v-5.3h-5.3v-5.4h5.3z" fill="#5cb5b0"/><circle cx="743.0" cy="686.4" r="8" fill="#5cb5b0"/><path d="M796.3 670.8h5.4v5.3h5.3v5.4h-5.3v5.3h-5.4v-5.3h-5.3v-5.4h5.3z" fill="#5cb5b0"/><circle cx="796.0" cy="690.0" r="8" fill="#5cb5b0"/><path d="M783.3 694.0h5.4v5.3h5.3v5.4h-5.3v5.3h-5.4v-5.3h-5.3v-5.4h5.3z" fill="#5cb5b0"/><path d="M856.3 676.0h5.4v5.3h5.3v5.4h-5.3v5.3h-5.4v-5.3h-5.3v-5.4h5.3z" fill="#5cb5b0"/><path d="M869.8 675.0l7.8 7.8-7.8 7.8-7.8-7.8z" fill="#5cb5b0"/><path d="M862.0 684.6l7.8 7.8-7.8 7.8-7.8-7.8z" fill="#5cb5b0"/><rect x="875.0" y="680.0" width="16" height="16" fill="#5cb5b0"/><circle cx="840.0" cy="711.0" r="8" fill="#5cb5b0"/><circle cx="847.0" cy="712.7" r="8" fill="#5cb5b0"/><rect x="864.0" y="711.0" width="16" height="16" fill="#5cb5b0"/><circle cx="942.0" cy="674.0" r="8" fill="#5cb5b0"/><circle cx="1027.0" cy="681.8" r="8" fill="#5cb5b0"/><rect x="1017.0" y="690.0" width="16" height="16" fill="#5cb5b0"/><path d="M1070.3 683.8h5.4v5.3h5.3v5.4h-5.3v5.3h-5.4v-5.3h-5.3v-5.4h5.3z" fill="#5cb5b0"/><path d="M1088.2 695.0h5.4v5.3h5.3v5.4h-5.3v5.3h-5.4v-5.3h-5.3v-5.4h5.3z" fill="#5cb5b0"/><circle cx="965.0" cy="716.7" r="8" fill="#5cb5b0"/><rect x="964.9" y="696.8" width="16" height="16" fill="#5cb5b0"/><rect x="945.7" y="701.0" width="16" height="16" fill="#5cb5b0"/><rect x="937.6" y="701.0" width="16" height="16" fill="#5cb5b0"/><rect x="914.0" y="702.0" width="16" height="16" fill="#5cb5b0"/><path d="M940.0 704.7l7.8 7.8-7.8 7.8-7.8-7.8z" fill="#5cb5b0"/><rect x="524.7" y="720.7" width="16" height="16" fill="#5cb5b0"/><rect x="517.0" y="728.0" width="16" height="16" fill="#5cb5b0"/><path d="M573.1 717.0h5.4v5.3h5.3v5.4h-5.3v5.3h-5.4v-5.3h-5.3v-5.4h5.3z" fill="#5cb5b0"/><circle cx="619.0" cy="725.0" r="8" fill="#5cb5b0"/><path d="M770.8 712.7h5.4v5.3h5.3v5.4h-5.3v5.3h-5.4v-5.3h-5.3v-5.4h5.3z" fill="#4a3c31"/><path d="M754.3 730.2l7.8 7.8-7.8 7.8-7.8-7.8z" fill="#4a3c31"/><path d="M732.0 724.3l7.8 7.8-7.8 7.8-7.8-7.8z" fill="#4a3c31"/><path d="M676.6 729.0l7.8 7.8-7.8 7.8-7.8-7.8z" fill="#4a3c31"/><path d="M895.4 718.7l7.8 7.8-7.8 7.8-7.8-7.8z" fill="#4a3c31"/><path d="M694.0 720.0h5.4v5.3h5.3v5.4h-5.3v5.3h-5.4v-5.3h-5.3v-5.4h5.3z" fill="#4a3c31"/><path d="M701.3 722.9h5.4v5.3h5.3v5.4h-5.3v5.3h-5.4v-5.3h-5.3v-5.4h5.3z" fill="#4a3c31"/><rect x="696.2" y="727.5" width="16" height="16" fill="#4a3c31"/><path d="M647.5 728.1h5.4v5.3h5.3v5.4h-5.3v5.3h-5.4v-5.3h-5.3v-5.4h5.3z" fill="#4a3c31"/><circle cx="663.7" cy="733.0" r="8" fill="#4a3c31"/><circle cx="684.1" cy="733.0" r="8" fill="#4a3c31"/><rect x="625.2" y="728.5" width="16" height="16" fill="#4a3c31"/><path d="M614.2 725.7l7.8 7.8-7.8 7.8-7.8-7.8z" fill="#4a3c31"/><path d="M677.0 725.4l7.8 7.8-7.8 7.8-7.8-7.8z" fill="#4a3c31"/><circle cx="606.5" cy="733.7" r="8" fill="#4a3c31"/><path d="M686.1 729.8l7.8 7.8-7.8 7.8-7.8-7.8z" fill="#4a3c31"/><rect x="716.2" y="724.5" width="16" height="16" fill="#4a3c31"/><path d="M802.6 727.1h5.4v5.3h5.3v5.4h-5.3v5.3h-5.4v-5.3h-5.3v-5.4h5.3z" fill="#4a3c31"/><circle cx="738.1" cy="730.7" r="8" fill="#4a3c31"/><path d="M830.6 728.3l7.8 7.8-7.8 7.8-7.8-7.8z" fill="#4a3c31"/><rect x="786.0" y="726.5" width="16" height="16" fill="#4a3c31"/><path d="M849.6 729.7h5.4v5.3h5.3v5.4h-5.3v5.3h-5.4v-5.3h-5.3v-5.4h5.3z" fill="#4a3c31"/><path d="M653.2 473.9h5.4v5.3h5.3v5.4h-5.3v5.3h-5.4v-5.3h-5.3v-5.4h5.3z" fill="#4a3c31"/><circle cx="604.0" cy="533.8" r="8" fill="#4a3c31"/><rect x="602.0" y="544.9" width="16" height="16" fill="#4a3c31"/><path d="M654.1 528.7h5.4v5.3h5.3v5.4h-5.3v5.3h-5.4v-5.3h-5.3v-5.4h5.3z" fill="#4a3c31"/><path d="M647.9 536.2l7.8 7.8-7.8 7.8-7.8-7.8z" fill="#4a3c31"/><path d="M567.0 619.1l7.8 7.8-7.8 7.8-7.8-7.8z" fill="#4a3c31"/><rect x="560.0" y="634.9" width="16" height="16" fill="#4a3c31"/><circle cx="552.9" cy="652.0" r="8" fill="#4a3c31"/><path d="M660.3 700.0h5.4v5.3h5.3v5.4h-5.3v5.3h-5.4v-5.3h-5.3v-5.4h5.3z" fill="#4a3c31"/><path d="M814.8 708.0h5.4v5.3h5.3v5.4h-5.3v5.3h-5.4v-5.3h-5.3v-5.4h5.3z" fill="#4a3c31"/><rect x="816.7" y="712.0" width="16" height="16" fill="#4a3c31"/><path d="M835.6 715.2l7.8 7.8-7.8 7.8-7.8-7.8z" fill="#4a3c31"/><path d="M863.3 704.7h5.4v5.3h5.3v5.4h-5.3v5.3h-5.4v-5.3h-5.3v-5.4h5.3z" fill="#4a3c31"/><path d="M915.3 711.8h5.4v5.3h5.3v5.4h-5.3v5.3h-5.4v-5.3h-5.3v-5.4h5.3z" fill="#4a3c31"/><circle cx="510.0" cy="736.0" r="8" fill="#4a3c31"/><rect x="497.0" y="728.0" width="16" height="16" fill="#4a3c31"/><path d="M530.0 728.2l7.8 7.8-7.8 7.8-7.8-7.8z" fill="#4a3c31"/><rect x="595.0" y="716.6" width="16" height="16" fill="#4a3c31"/><rect x="624.5" y="719.0" width="16" height="16" fill="#4a3c31"/><path d="M629.0 714.2l7.8 7.8-7.8 7.8-7.8-7.8z" fill="#4a3c31"/><rect x="646.0" y="718.0" width="16" height="16" fill="#4a3c31"/><rect x="692.0" y="723.0" width="16" height="16" fill="#4a3c31"/><circle cx="693.4" cy="737.0" r="8" fill="#a0c98a"/><rect x="698.5" y="730.3" width="16" height="16" fill="#a0c98a"/><path d="M601.0 725.4h5.4v5.3h5.3v5.4h-5.3v5.3h-5.4v-5.3h-5.3v-5.4h5.3z" fill="#a0c98a"/><rect x="889.6" y="717.8" width="16" height="16" fill="#a0c98a"/><rect x="674.6" y="726.5" width="16" height="16" fill="#a0c98a"/><rect x="700.6" y="722.4" width="16" height="16" fill="#a0c98a"/><path d="M747.4 722.7l7.8 7.8-7.8 7.8-7.8-7.8z" fill="#a0c98a"/><rect x="729.7" y="727.7" width="16" height="16" fill="#a0c98a"/><path d="M810.8 719.1l7.8 7.8-7.8 7.8-7.8-7.8z" fill="#a0c98a"/><circle cx="756.4" cy="736.7" r="8" fill="#a0c98a"/><path d="M629.0 720.7l7.8 7.8-7.8 7.8-7.8-7.8z" fill="#a0c98a"/><path d="M695.8 724.5h5.4v5.3h5.3v5.4h-5.3v5.3h-5.4v-5.3h-5.3v-5.4h5.3z" fill="#a0c98a"/><path d="M810.2 724.1l7.8 7.8-7.8 7.8-7.8-7.8z" fill="#a0c98a"/><path d="M791.9 731.3h5.4v5.3h5.3v5.4h-5.3v5.3h-5.4v-5.3h-5.3v-5.4h5.3z" fill="#a0c98a"/><path d="M866.9 719.1h5.4v5.3h5.3v5.4h-5.3v5.3h-5.4v-5.3h-5.3v-5.4h5.3z" fill="#a0c98a"/><path d="M703.3 719.8l7.8 7.8-7.8 7.8-7.8-7.8z" fill="#a0c98a"/><path d="M629.8 722.4h5.4v5.3h5.3v5.4h-5.3v5.3h-5.4v-5.3h-5.3v-5.4h5.3z" fill="#a0c98a"/><path d="M879.0 716.3l7.8 7.8-7.8 7.8-7.8-7.8z" fill="#a0c98a"/><rect x="805.1" y="729.0" width="16" height="16" fill="#a0c98a"/><rect x="631.2" y="725.5" width="16" height="16" fill="#a0c98a"/><path d="M798.1 731.6l7.8 7.8-7.8 7.8-7.8-7.8z" fill="#a0c98a"/><path d="M593.3 728.4l7.8 7.8-7.8 7.8-7.8-7.8z" fill="#a0c98a"/><rect x="708.6" y="719.2" width="16" height="16" fill="#a0c98a"/><rect x="605.1" y="730.6" width="16" height="16" fill="#a0c98a"/><path d="M865.7 717.6l7.8 7.8-7.8 7.8-7.8-7.8z" fill="#a0c98a"/><circle cx="780.5" cy="728.1" r="8" fill="#a0c98a"/><circle cx="857.7" cy="733.7" r="8" fill="#a0c98a"/><path d="M741.8 721.2l7.8 7.8-7.8 7.8-7.8-7.8z" fill="#a0c98a"/><circle cx="637.9" cy="728.3" r="8" fill="#a0c98a"/><path d="M829.3 718.7l7.8 7.8-7.8 7.8-7.8-7.8z" fill="#a0c98a"/><rect x="825.6" y="711.7" width="16" height="16" fill="#a0c98a"/><path d="M841.6 723.8h5.4v5.3h5.3v5.4h-5.3v5.3h-5.4v-5.3h-5.3v-5.4h5.3z" fill="#a0c98a"/><circle cx="703.3" cy="724.5" r="8" fill="#a0c98a"/><rect x="882.9" y="716.5" width="16" height="16" fill="#a0c98a"/><circle cx="697.7" cy="735.2" r="8" fill="#a0c98a"/><circle cx="742.1" cy="725.8" r="8" fill="#a0c98a"/><path d="M738.9 727.2h5.4v5.3h5.3v5.4h-5.3v5.3h-5.4v-5.3h-5.3v-5.4h5.3z" fill="#a0c98a"/><path d="M816.2 722.3h5.4v5.3h5.3v5.4h-5.3v5.3h-5.4v-5.3h-5.3v-5.4h5.3z" fill="#a0c98a"/><path d="M841.7 722.6h5.4v5.3h5.3v5.4h-5.3v5.3h-5.4v-5.3h-5.3v-5.4h5.3z" fill="#a0c98a"/><circle cx="797.7" cy="725.7" r="8" fill="#a0c98a"/><rect x="592.8" y="725.0" width="16" height="16" fill="#a0c98a"/><path d="M874.1 725.1h5.4v5.3h5.3v5.4h-5.3v5.3h-5.4v-5.3h-5.3v-5.4h5.3z" fill="#a0c98a"/><circle cx="758.5" cy="725.0" r="8" fill="#a0c98a"/><circle cx="645.9" cy="726.9" r="8" fill="#a0c98a"/><rect x="860.5" y="725.1" width="16" height="16" fill="#a0c98a"/><rect x="800.8" y="715.1" width="16" height="16" fill="#a0c98a"/><path d="M878.1 721.9h5.4v5.3h5.3v5.4h-5.3v5.3h-5.4v-5.3h-5.3v-5.4h5.3z" fill="#a0c98a"/><circle cx="630.1" cy="732.2" r="8" fill="#a0c98a"/><circle cx="802.1" cy="726.2" r="8" fill="#a0c98a"/><path d="M872.8 721.2l7.8 7.8-7.8 7.8-7.8-7.8z" fill="#a0c98a"/><circle cx="636.8" cy="741" r="8" fill="#a0c98a"/><rect x="708.7" y="714.8" width="16" height="16" fill="#a0c98a"/><rect x="634.5" y="720.4" width="16" height="16" fill="#a0c98a"/><path d="M703.6 727.1l7.8 7.8-7.8 7.8-7.8-7.8z" fill="#a0c98a"/><path d="M598.1 722.2l7.8 7.8-7.8 7.8-7.8-7.8z" fill="#a0c98a"/><circle cx="754.0" cy="729.0" r="8" fill="#a0c98a"/><rect x="667.1" y="723.3" width="16" height="16" fill="#a0c98a"/><path d="M716.4 727.8h5.4v5.3h5.3v5.4h-5.3v5.3h-5.4v-5.3h-5.3v-5.4h5.3z" fill="#a0c98a"/><circle cx="872.2" cy="728.4" r="8" fill="#a0c98a"/><circle cx="674.8" cy="731.1" r="8" fill="#a0c98a"/><rect x="690.2" y="713.2" width="16" height="16" fill="#a0c98a"/><path d="M755.5 726.0h5.4v5.3h5.3v5.4h-5.3v5.3h-5.4v-5.3h-5.3v-5.4h5.3z" fill="#a0c98a"/><path d="M748.5 725.3l7.8 7.8-7.8 7.8-7.8-7.8z" fill="#a0c98a"/><rect x="595.6" y="731.5" width="16" height="16" fill="#a0c98a"/><path d="M794.8 727.2h5.4v5.3h5.3v5.4h-5.3v5.3h-5.4v-5.3h-5.3v-5.4h5.3z" fill="#a0c98a"/><rect x="887.7" y="717.5" width="16" height="16" fill="#a0c98a"/><circle cx="718.7" cy="730.9" r="8" fill="#a0c98a"/><path d="M735.8 726.7l7.8 7.8-7.8 7.8-7.8-7.8z" fill="#a0c98a"/><rect x="888.4" y="723.5" width="16" height="16" fill="#a0c98a"/><path d="M602.8 730.1l7.8 7.8-7.8 7.8-7.8-7.8z" fill="#a0c98a"/><rect x="703.4" y="721.6" width="16" height="16" fill="#a0c98a"/><circle cx="892.5" cy="736.6" r="8" fill="#a0c98a"/><circle cx="889.7" cy="734.8" r="8" fill="#a0c98a"/><circle cx="896.2" cy="734.8" r="8" fill="#a0c98a"/><rect x="893.2" y="722.3" width="16" height="16" fill="#a0c98a"/><circle cx="715.0" cy="679.0" r="8" fill="#a0c98a"/><circle cx="595.0" cy="716.0" r="8" fill="#a0c98a"/><rect x="816.0" y="642.0" width="16" height="16" fill="#a0c98a"/><path d="M815.0 646.0l7.8 7.8-7.8 7.8-7.8-7.8z" fill="#a0c98a"/><path d="M849.3 637.0h5.4v5.3h5.3v5.4h-5.3v5.3h-5.4v-5.3h-5.3v-5.4h5.3z" fill="#a0c98a"/><circle cx="885.5" cy="730.6" r="8" fill="#a0c98a"/><circle cx="896.0" cy="731.0" r="8" fill="#a0c98a"/><rect x="1029.0" y="695.9" width="16" height="16" fill="#a0c98a"/><path d="M1009.3 699.7h5.4v5.3h5.3v5.4h-5.3v5.3h-5.4v-5.3h-5.3v-5.4h5.3z" fill="#a0c98a"/><circle cx="1112.0" cy="700.0" r="8" fill="#a0c98a"/><path d="M1089.3 720.0h5.4v5.3h5.3v5.4h-5.3v5.3h-5.4v-5.3h-5.3v-5.4h5.3z" fill="#a0c98a"/><path d="M1107.3 720.6h5.4v5.3h5.3v5.4h-5.3v5.3h-5.4v-5.3h-5.3v-5.4h5.3z" fill="#a0c98a"/><rect x="1086.0" y="720.6" width="16" height="16" fill="#a0c98a"/><rect x="1033.0" y="719.9" width="16" height="16" fill="#a0c98a"/><path d="M1045.0 722.7l7.8 7.8-7.8 7.8-7.8-7.8z" fill="#a0c98a"/><circle cx="1007.0" cy="725.8" r="8" fill="#a0c98a"/><path d="M1009.0 722.0l7.8 7.8-7.8 7.8-7.8-7.8z" fill="#a0c98a"/><rect x="966.4" y="722.7" width="16" height="16" fill="#a0c98a"/><path d="M980.0 721.0l7.8 7.8-7.8 7.8-7.8-7.8z" fill="#a0c98a"/><circle cx="974.0" cy="731.0" r="8" fill="#a0c98a"/><path d="M962.5 707.0l7.8 7.8-7.8 7.8-7.8-7.8z" fill="#a0c98a"/><rect x="926.0" y="693.0" width="16" height="16" fill="#a0c98a"/><path d="M947.5 702.2l7.8 7.8-7.8 7.8-7.8-7.8z" fill="#a0c98a"/><circle cx="912.0" cy="720.6" r="8" fill="#a0c98a"/><path d="M931.3 719.0h5.4v5.3h5.3v5.4h-5.3v5.3h-5.4v-5.3h-5.3v-5.4h5.3z" fill="#a0c98a"/><rect x="934.0" y="725.0" width="16" height="16" fill="#a0c98a"/><circle cx="895.8" cy="732.0" r="8" fill="#a0c98a"/><circle cx="499.0" cy="736.0" r="8" fill="#a0c98a"/><rect x="527.0" y="725.0" width="16" height="16" fill="#a0c98a"/><path d="M565.0 723.9l7.8 7.8-7.8 7.8-7.8-7.8z" fill="#a0c98a"/><circle cx="577.0" cy="736.0" r="8" fill="#a0c98a"/><circle cx="581.5" cy="732.0" r="8" fill="#a0c98a"/><circle cx="681.7" cy="722.5" r="8" fill="#a0c98a"/></g><text x="0" y="0" transform="translate(446.2 465.5) rotate(-90)" text-anchor="middle" font-size="11" fill="#6b6764" textLength="83" lengthAdjust="spacingAndGlyphs">AMOUNT_SOLD</text></svg>
<span class="t" style="left:458.64px;top:187.60px;font-size:11px;color:#3a3632;transform:scaleX(1.0354);transform-origin:100% 50%;">600万</span>
<span class="t" style="left:458.64px;top:278.60px;font-size:11px;color:#3a3632;transform:scaleX(1.0354);transform-origin:100% 50%;">500万</span>
<span class="t" style="left:458.64px;top:368.60px;font-size:11px;color:#3a3632;transform:scaleX(1.0354);transform-origin:100% 50%;">400万</span>
<span class="t" style="left:458.64px;top:459.60px;font-size:11px;color:#3a3632;transform:scaleX(1.0354);transform-origin:100% 50%;">300万</span>
<span class="t" style="left:458.64px;top:549.60px;font-size:11px;color:#3a3632;transform:scaleX(1.0354);transform-origin:100% 50%;">200万</span>
<span class="t" style="left:458.64px;top:640.60px;font-size:11px;color:#3a3632;transform:scaleX(1.0354);transform-origin:100% 50%;">100万</span>
<span class="t" style="left:481.38px;top:730.60px;font-size:11px;color:#3a3632;transform:scaleX(1.0122);transform-origin:100% 50%;">0</span>
<span class="t" style="left:494.74px;top:749.30px;font-size:11px;color:#3a3632;transform:scaleX(1.0122);transform-origin:50% 50%;">0</span>
<span class="t" style="left:629.03px;top:749.30px;font-size:11px;color:#3a3632;transform:scaleX(1.0170);transform-origin:50% 50%;">2,000</span>
<span class="t" style="left:774.03px;top:749.30px;font-size:11px;color:#3a3632;transform:scaleX(1.0388);transform-origin:50% 50%;">4,000</span>
<span class="t" style="left:918.03px;top:749.30px;font-size:11px;color:#3a3632;transform:scaleX(1.0388);transform-origin:50% 50%;">6,000</span>
<span class="t" style="left:1063.03px;top:749.30px;font-size:11px;color:#3a3632;transform:scaleX(1.0388);transform-origin:50% 50%;">8,000</span>
<span class="t" style="left:1203.97px;top:749.30px;font-size:11px;color:#3a3632;transform:scaleX(1.0399);transform-origin:50% 50%;">10,000</span>
<span class="t" style="left:813.66px;top:770.00px;font-size:11px;color:#6b6764;transform:scaleX(0.9925);transform-origin:50% 50%;">QUANTITY_SOLD</span>
<span class="t" style="left:516.40px;top:804.00px;font-size:11px;color:#6b6764;transform:scaleX(0.9257);transform-origin:0 50%;">PROD_CATEGORY</span>
<div class="b" style="left:626px;top:804px;width:10px;height:10px;background:#1f5f66"></div>
<span class="t" style="left:642.60px;top:804.00px;font-size:11px;color:#3a3632;transform:scaleX(1.0410);transform-origin:0 50%;">Electronics</span>
<div class="b" style="left:710px;top:804px;width:10px;height:10px;background:#e0801a"></div>
<span class="t" style="left:727.00px;top:804.00px;font-size:11px;color:#3a3632;transform:scaleX(1.0170);transform-origin:0 50%;">Hardware</span>
<div class="b" style="left:786.8px;top:804px;width:10px;height:10px;background:#5cb5b0"></div>
<span class="t" style="left:803.50px;top:804.00px;font-size:11px;color:#3a3632;transform:scaleX(1.0252);transform-origin:0 50%;">Peripherals and Accessories</span>
<div class="b" style="left:957.5px;top:804px;width:10px;height:10px;background:#4a3c31"></div>
<span class="t" style="left:974.00px;top:804.00px;font-size:11px;color:#3a3632;transform:scaleX(1.0435);transform-origin:0 50%;">Photo</span>
<div class="b" style="left:1015px;top:804px;width:10px;height:10px;background:#a0c98a"></div>
<span class="t" style="left:1031.50px;top:804.00px;font-size:11px;color:#3a3632;transform:scaleX(1.0948);transform-origin:0 50%;">Software/Other</span>
<span class="t" style="left:516.40px;top:836.30px;font-size:11px;color:#6b6764;transform:scaleX(0.9707);transform-origin:0 50%;">CALENDAR_YEAR (グループ化)</span>
<svg class="b" style="left:689px;top:834px" width="372" height="13" viewBox="0 0 372 13" ><g fill="#808080"><circle cx="6.2" cy="6.4" r="5.2"/><rect x="114.4" y="1.4" width="10" height="10"/><path d="M243 0.6l5.8 5.8-5.8 5.8-5.8-5.8z"/><path d="M363.2 1.2h3.6v3.4h3.4v3.6h-3.4v3.4h-3.6V8.200000000000001h-3.4V4.6h3.4z"/></g></svg>
<span class="t" style="left:707.00px;top:835.30px;font-size:11px;color:#3a3632;transform:scaleX(1.0646);transform-origin:0 50%;">1,998 - 1,998.15</span>
<span class="t" style="left:820.60px;top:835.30px;font-size:11px;color:#3a3632;transform:scaleX(1.0527);transform-origin:0 50%;">1,998.9 - 1,999.05</span>
<span class="t" style="left:943.00px;top:835.30px;font-size:11px;color:#3a3632;transform:scaleX(1.0639);transform-origin:0 50%;">1,999.95 - 2,000.1</span>
<span class="t" style="left:1065.40px;top:835.30px;font-size:11px;color:#3a3632;transform:scaleX(1.0683);transform-origin:0 50%;">2,001 - 2,001.15</span>
</div>
</body></html>
